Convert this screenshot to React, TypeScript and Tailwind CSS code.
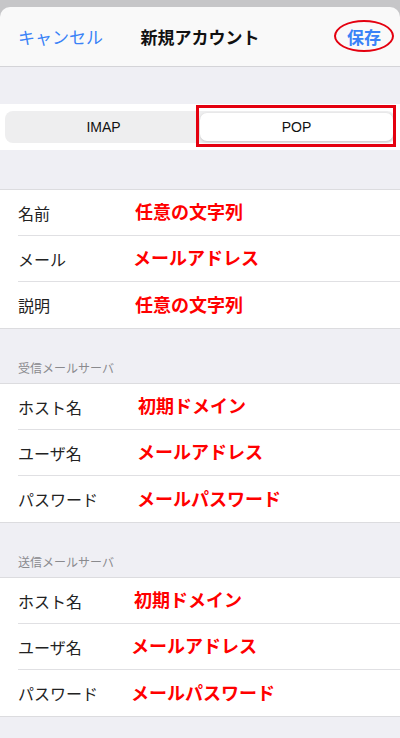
const jp = "font-['Noto_Sans_CJK_JP','Noto_Sans',sans-serif]"

type Row = { label: string; value: string; shift: string }

const account: Row[] = [
  { label: '名前', value: '任意の文字列', shift: 'ml-0' },
  { label: 'メール', value: 'メールアドレス', shift: 'ml-[-2px]' },
  { label: '説明', value: '任意の文字列', shift: 'ml-0' },
]

const incoming: Row[] = [
  { label: 'ホスト名', value: '初期ドメイン', shift: 'ml-[3px]' },
  { label: 'ユーザ名', value: 'メールアドレス', shift: 'ml-[2px]' },
  { label: 'パスワード', value: 'メールパスワード', shift: 'ml-[2px]' },
]

const outgoing: Row[] = [
  { label: 'ホスト名', value: '初期ドメイン', shift: 'ml-[-1px]' },
  { label: 'ユーザ名', value: 'メールアドレス', shift: 'ml-[-4px]' },
  { label: 'パスワード', value: 'メールパスワード', shift: 'ml-[-4px]' },
]

// 白いリスト（区切り線は左を空けて引く）
function Group({ rows }: { rows: Row[] }) {
  return (
    <div className="border-y border-[#dcdcdf] bg-white">
      {rows.map((r, i) => (
        <div key={i} className="pl-[18px]">
          <div
            className={
              'flex h-[46px] items-center ' +
              (i < rows.length - 1 ? 'border-b border-[#e0e0e3]' : '')
            }
          >
            <span className="w-[117px] shrink-0 text-[16px] text-[#222]">{r.label}</span>
            <span className={'-mt-[2px] text-[18px] font-bold text-[#ff0000] ' + r.shift}>{r.value}</span>
          </div>
        </div>
      ))}
    </div>
  )
}

export default function App() {
  return (
    <div className={`h-[738px] w-[400px] overflow-hidden bg-[#c6c6c8] pt-[7px] ${jp}`}>
      {/* ナビゲーションバー */}
      <div className="flex h-[60px] items-center rounded-t-[10px] border-b border-[#d4d4d8] bg-[#f9f9f9] px-[18px]">
        <div className="flex-1 text-[17px] text-[#3a82f7]">キャンセル</div>
        <div className="text-[17px] font-bold text-[#111]">新規アカウント</div>
        <div className="flex flex-1 justify-end">
          <span className="relative mr-[1px] text-[17px] leading-none font-bold text-[#3a82f7]">
            保存
            <span className="absolute -inset-x-[13px] -top-[8px] -bottom-[7px] rounded-[50%] border-[2.5px] border-[#e4000f]" />
          </span>
        </div>
      </div>

      <div className="bg-[#efeff4]">
        <div className="h-[37px]" />

        {/* IMAP / POP 切替 */}
        <div className="bg-white px-[5px] py-[7px]">
          <div className="flex h-[32px] rounded-[8px] bg-[#eeeeef] p-[2px] font-['Liberation_Sans',sans-serif] text-[14px] font-medium text-[#111]">
            <div className="flex flex-1 items-center justify-center">IMAP</div>
            <div className="relative flex flex-1 items-center justify-center rounded-[7px] bg-white shadow-[0_1px_3px_rgba(0,0,0,0.18)]">
              POP
              <span className="absolute -top-[8px] -bottom-[6px] -left-[4px] -right-[3px] border-[3px] border-[#e4000f]" />
            </div>
          </div>
        </div>

        <div className="h-[39px]" />
        <Group rows={account} />

        <div className="flex h-[54px] items-end px-[18px] pb-[6px] text-[12px] text-[#8a8a8e]">受信メールサーバ</div>
        <Group rows={incoming} />

        <div className="flex h-[54px] items-end px-[18px] pb-[6px] text-[12px] text-[#8a8a8e]">送信メールサーバ</div>
        <Group rows={outgoing} />

        <div className="h-[40px]" />
      </div>
    </div>
  )
}
